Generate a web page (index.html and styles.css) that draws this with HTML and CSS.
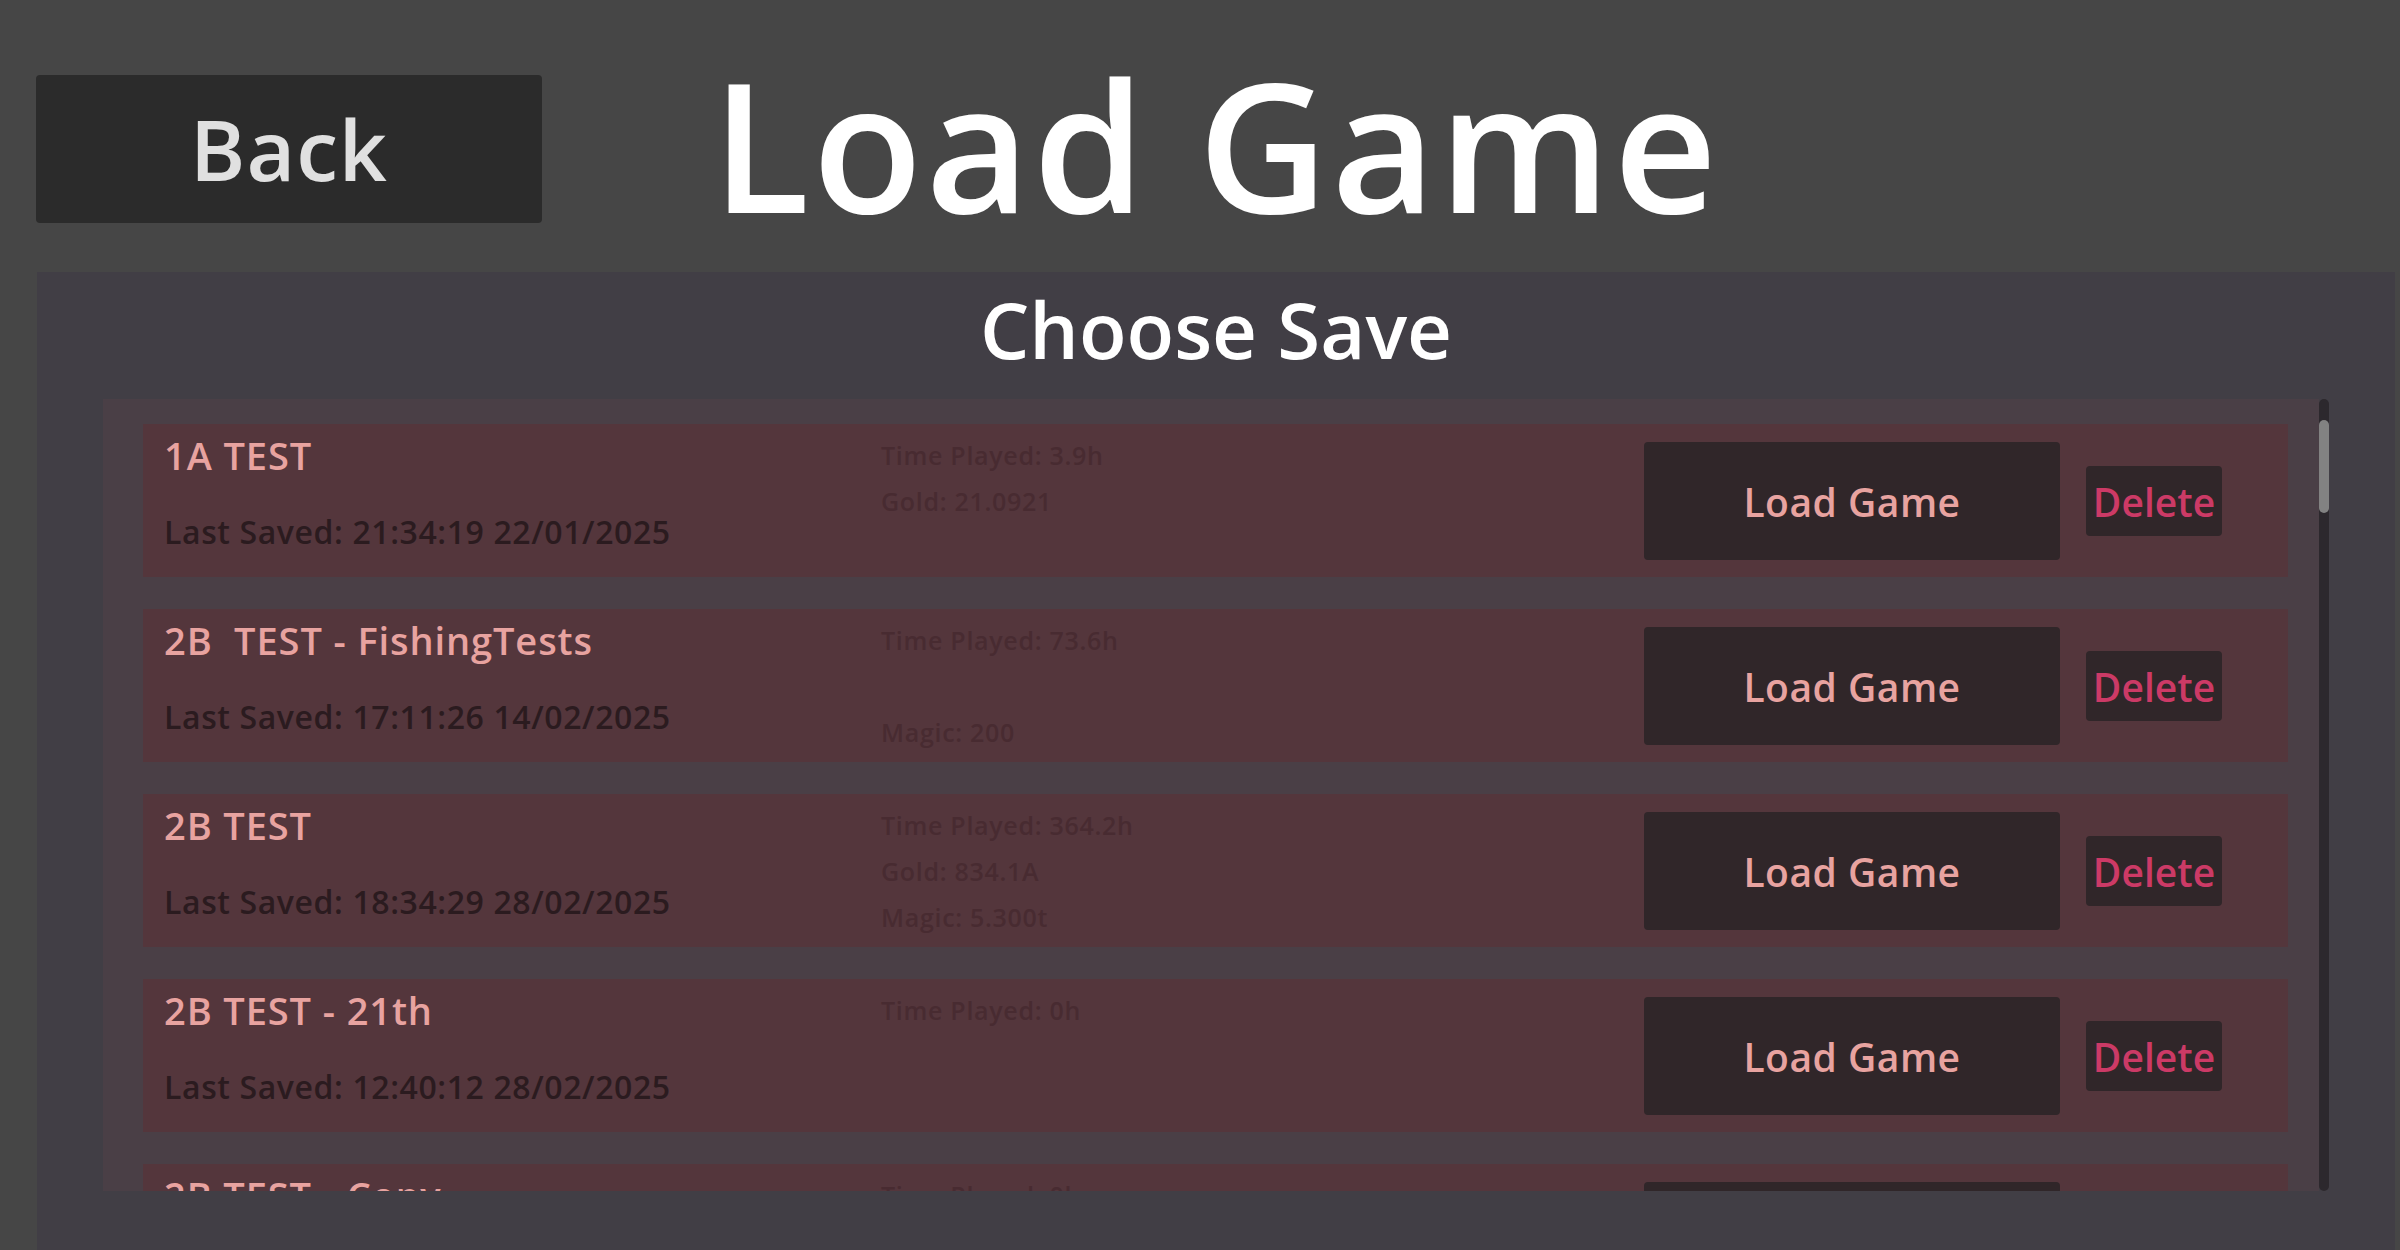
FILE: index.html
```html
<!DOCTYPE html>
<html lang="en">
<head>
<meta charset="utf-8">
<title>Load Game</title>
<link rel="stylesheet" href="styles.css">
</head>
<body>
<header class="top">
  <button class="back-btn">Back</button>
  <h1 class="title">Load Game</h1>
  <div class="spacer"></div>
</header>
<main class="panel">
  <h2 class="panel-title">Choose Save</h2>
  <div class="list">
    <div class="list-content">
      <div class="card">
        <div class="info">
          <div class="name">1A TEST</div>
          <div class="saved">Last Saved: 21:34:19 22/01/2025</div>
        </div>
        <div class="stats">
          <div class="stat">Time Played: 3.9h</div>
          <div class="stat">Gold: 21.0921</div>
        </div>
        <button class="load-btn">Load Game</button>
        <button class="del-btn">Delete</button>
      </div>
      <div class="card">
        <div class="info">
          <div class="name">2B  TEST - FishingTests</div>
          <div class="saved">Last Saved: 17:11:26 14/02/2025</div>
        </div>
        <div class="stats">
          <div class="stat">Time Played: 73.6h</div>
          <div class="stat"></div>
          <div class="stat">Magic: 200</div>
        </div>
        <button class="load-btn">Load Game</button>
        <button class="del-btn">Delete</button>
      </div>
      <div class="card">
        <div class="info">
          <div class="name">2B TEST</div>
          <div class="saved">Last Saved: 18:34:29 28/02/2025</div>
        </div>
        <div class="stats">
          <div class="stat">Time Played: 364.2h</div>
          <div class="stat">Gold: 834.1A</div>
          <div class="stat">Magic: 5.300t</div>
        </div>
        <button class="load-btn">Load Game</button>
        <button class="del-btn">Delete</button>
      </div>
      <div class="card">
        <div class="info">
          <div class="name">2B TEST - 21th</div>
          <div class="saved">Last Saved: 12:40:12 28/02/2025</div>
        </div>
        <div class="stats">
          <div class="stat">Time Played: 0h</div>
        </div>
        <button class="load-btn">Load Game</button>
        <button class="del-btn">Delete</button>
      </div>
      <div class="card">
        <div class="info">
          <div class="name">2B TEST - Copy</div>
        </div>
        <div class="stats">
          <div class="stat">Time Played: 0h</div>
        </div>
        <button class="load-btn"></button>
        <button class="del-btn"></button>
      </div>
    </div>
    <div class="scrollbar"><div class="grabber"></div></div>
  </div>
</main>
</body>
</html>
```

FILE: styles.css
```css
* { box-sizing: border-box; }
html, body {
  margin: 0;
  padding: 0;
  width: 2400px;
  height: 1250px;
  overflow: hidden;
  background: #464646;
  font-family: "Open Sans", "Noto Sans", sans-serif;
  font-weight: 600;
}
button {
  font-family: inherit;
  font-weight: 600;
  border: none;
  padding: 0;
  cursor: pointer;
}
.top {
  height: 272px;
  display: grid;
  grid-template-columns: 1fr auto 1fr;
  align-items: start;
  padding: 54px 5px 0 37px;
}
.back-btn {
  justify-self: start;
  margin-top: 21px;
  margin-left: -1px;
  width: 506px;
  height: 148px;
  background: #2b2b2b;
  color: #e0e0e0;
  border-radius: 4px;
  font-size: 84px;
  line-height: 1;
  letter-spacing: 1px;
}
.title {
  margin: 0;
  color: #ffffff;
  font-size: 180px;
  line-height: 180px;
  font-weight: 600;
  letter-spacing: 3px;
}
.panel {
  margin: 0 5px 0 37px;
  height: 978px;
  background: #413e45;
  padding: 18px 66px 0 66px;
  display: flex;
  flex-direction: column;
}
.panel-title {
  margin: 0;
  text-align: center;
  color: #ffffff;
  font-size: 78px;
  line-height: 78px;
  font-weight: 600;
}
.list {
  margin-top: 31px;
  height: 792px;
  display: flex;
  overflow: hidden;
}
.list-content {
  flex: 1;
  background: #4a3f46;
  padding: 25px 31px 0 40px;
  display: flex;
  flex-direction: column;
  gap: 32px;
  overflow: hidden;
}
.scrollbar {
  width: 10px;
  height: 100%;
  background: #2c282d;
  border-radius: 5px;
  padding-top: 21px;
}
.grabber {
  height: 93px;
  background: #828282;
  border-radius: 5px;
}
.card {
  flex: none;
  height: 153px;
  background: #54363c;
  display: grid;
  grid-template-columns: 717px 1fr 416px 136px;
  column-gap: 26px;
  align-items: start;
  padding: 0 66px 0 21px;
}
.card > .stats { margin-left: -26px; }
.info { padding-top: 8px; }
.name {
  color: #e8a3a0;
  font-size: 38px;
  line-height: 46px;
  letter-spacing: 0.9px;
  white-space: pre;
}
.saved {
  margin-top: 34px;
  color: #2b1b1f;
  font-size: 32px;
  font-weight: 600;
  line-height: 40px;
  letter-spacing: 0.6px;
  white-space: nowrap;
}
.stats { padding-top: 8px; }
.stat {
  color: #482b31;
  font-size: 25px;
  line-height: 46px;
  height: 46px;
  letter-spacing: 0.7px;
  white-space: nowrap;
}
.load-btn {
  margin-top: 18px;
  height: 118px;
  background: #302629;
  color: #e8a3a0;
  border-radius: 4px;
  font-size: 39px;
  line-height: 1;
  letter-spacing: 0.5px;
}
.del-btn {
  margin-top: 42px;
  height: 70px;
  background: #302629;
  color: #cc3a66;
  border-radius: 4px;
  font-size: 39px;
  line-height: 1;
}
```
